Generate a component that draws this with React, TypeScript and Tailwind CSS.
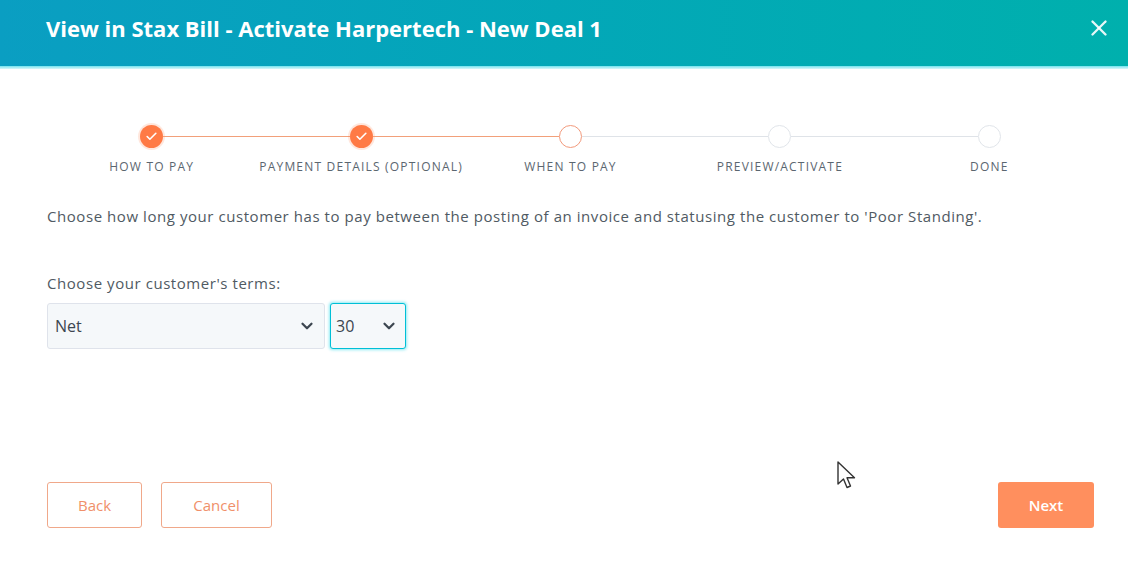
import { Check, ChevronDown, X } from 'lucide-react';

const steps = [
  { label: 'HOW TO PAY', state: 'done' },
  { label: 'PAYMENT DETAILS (OPTIONAL)', state: 'done' },
  { label: 'WHEN TO PAY', state: 'current' },
  { label: 'PREVIEW/ACTIVATE', state: 'todo' },
  { label: 'DONE', state: 'todo' },
];

const font = { fontFamily: '"Open Sans", Lato, sans-serif' };

const Stepper = () => (
  <div className="grid grid-cols-5">
    {steps.map((step, i) => {
      // lines left of a step are orange up to the current one
      const leftDone = i > 0 && steps[i].state !== 'todo';
      const rightDone = i < steps.length - 1 && steps[i + 1].state !== 'todo';
      return (
        <div key={step.label} className="flex flex-col items-center">
          <div className="flex items-center w-full h-[24px]">
            <div
              className={`flex-1 h-px ${
                i === 0 ? 'bg-transparent' : leftDone ? 'bg-[#f2a07a]' : 'bg-[#dfe3e8]'
              }`}
            />
            {step.state === 'done' && (
              <div className="w-[23px] h-[23px] rounded-full bg-[#ff7a45] flex items-center justify-center shadow-[0_0_0_2px_rgba(255,122,69,0.18)]">
                <Check size={13} strokeWidth={3} className="text-white" />
              </div>
            )}
            {step.state === 'current' && (
              <div className="w-[23px] h-[23px] rounded-full bg-white border-[1.5px] border-[#f29a7c]" />
            )}
            {step.state === 'todo' && (
              <div className="w-[23px] h-[23px] rounded-full bg-white border-[1.5px] border-[#e1e5ea]" />
            )}
            <div
              className={`flex-1 h-px ${
                i === steps.length - 1 ? 'bg-transparent' : rightDone ? 'bg-[#f2a07a]' : 'bg-[#dfe3e8]'
              }`}
            />
          </div>
          <span className="mt-[13px] text-[12px] leading-none text-[#5b6670] tracking-[0.1em] whitespace-nowrap">
            {step.label}
          </span>
        </div>
      );
    })}
  </div>
);

const Cursor = () => (
  <svg
    className="absolute left-[836px] top-[460px]"
    width="22"
    height="32"
    viewBox="0 0 22 32"
  >
    <path
      d="M2 2 L2 24 L7.5 19 L11 27.5 L14.5 26 L11 17.8 L18.5 17.8 Z"
      fill="white"
      stroke="#333"
      strokeWidth="1.4"
      strokeLinejoin="round"
    />
  </svg>
);

export default function App() {
  return (
    <div className="relative w-[1128px] h-[576px] bg-white overflow-hidden" style={font}>
      {/* Header */}
      <div className="h-[66px] bg-gradient-to-r from-[#0a9ec2] to-[#00b0ad] flex items-center justify-between pl-[46px] pr-[16px] pb-[10px]">
        <h1 className="text-white text-[22px] font-bold">
          View in Stax Bill - Activate Harpertech - New Deal 1
        </h1>
        <X size={26} strokeWidth={2.2} className="text-white/90" />
      </div>
      <div className="h-[3px] bg-gradient-to-b from-[#6fe2ee] to-[#d8f7fa]" />

      {/* Body */}
      <div className="px-[47px] pt-[55px] pr-[34px]">
        <Stepper />

        <p className="mt-[32px] text-[15px] text-[#505a63] tracking-[0.56px]">
          Choose how long your customer has to pay between the posting of an invoice and statusing the customer to 'Poor Standing'.
        </p>

        <p className="mt-[44px] text-[15px] text-[#505a63] tracking-[0.56px]">Choose your customer's terms:</p>

        <div className="mt-[9px] flex gap-[5px]">
          <div className="w-[278px] h-[46px] rounded-[3px] bg-[#f5f8fa] border border-[#dfe3eb] flex items-center justify-between pl-[7px] pr-[8px]">
            <span className="text-[16px] text-[#3c4650]">Net</span>
            <ChevronDown size={18} strokeWidth={3} className="text-[#3c4650]" />
          </div>
          <div className="w-[76px] h-[46px] rounded-[3px] bg-[#f5f8fa] border border-[#00bfd6] shadow-[0_0_3px_1px_rgba(0,208,228,0.45)] flex items-center justify-between pl-[5px] pr-[7px]">
            <span className="text-[16px] text-[#3c4650]">30</span>
            <ChevronDown size={18} strokeWidth={3} className="text-[#3c4650]" />
          </div>
        </div>

        {/* Footer buttons */}
        <div className="mt-[133px] flex items-center">
          <button className="w-[95px] h-[46px] rounded-[3px] border border-[#f0a88a] bg-white text-[15px] text-[#f0906a]">
            Back
          </button>
          <button className="ml-[19px] w-[111px] h-[46px] rounded-[3px] border border-[#f0a88a] bg-white text-[15px] text-[#f0906a]">
            Cancel
          </button>
          <button className="ml-auto w-[96px] h-[46px] rounded-[3px] bg-[#ff8f5e] text-[15px] font-semibold text-white">
            Next
          </button>
        </div>
      </div>

      <Cursor />
    </div>
  );
}
